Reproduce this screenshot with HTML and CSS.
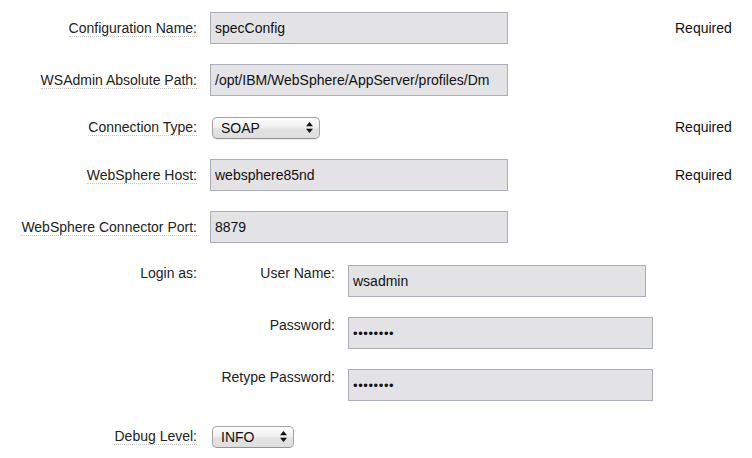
FILE: index.html
```html
<!DOCTYPE html>
<html>
<head>
<meta charset="utf-8">
<link rel="stylesheet" href="styles.css">
</head>
<body>
<form class="form">
  <div class="row">
    <label class="label"><span class="u">Configuration Name:</span></label>
    <div class="field"><input class="text" type="text" value="specConfig"></div>
    <div class="req">Required</div>
  </div>
  <div class="row">
    <label class="label"><span class="u">WSAdmin Absolute Path:</span></label>
    <div class="field"><input class="text" type="text" value="/opt/IBM/WebSphere/AppServer/profiles/Dm"></div>
    <div class="req"></div>
  </div>
  <div class="row row-select">
    <label class="label"><span class="u">Connection Type:</span></label>
    <div class="field">
      <span class="selwrap sel-soap">
        <select class="sel"><option>SOAP</option><option>RMI</option></select>
        <svg class="arrows" width="7" height="11" viewBox="0 0 7 11"><path d="M3.5 0 L7 4.2 L0 4.2 Z M0 6.8 L7 6.8 L3.5 11 Z" fill="#111"/></svg>
      </span>
    </div>
    <div class="req">Required</div>
  </div>
  <div class="row">
    <label class="label"><span class="u">WebSphere Host:</span></label>
    <div class="field"><input class="text" type="text" value="websphere85nd"></div>
    <div class="req">Required</div>
  </div>
  <div class="row">
    <label class="label"><span class="u">WebSphere Connector Port:</span></label>
    <div class="field"><input class="text" type="text" value="8879"></div>
    <div class="req"></div>
  </div>
  <div class="row row-login">
    <label class="label label-top">Login as:</label>
    <div class="login">
      <div class="subrow">
        <label class="sublabel">User Name:</label>
        <input class="text" type="text" value="wsadmin">
      </div>
      <div class="subrow">
        <label class="sublabel">Password:</label>
        <input class="text pw" type="password" value="password">
      </div>
      <div class="subrow">
        <label class="sublabel">Retype Password:</label>
        <input class="text pw" type="password" value="password">
      </div>
    </div>
  </div>
  <div class="row row-select">
    <label class="label"><span class="u">Debug Level:</span></label>
    <div class="field">
      <span class="selwrap sel-info">
        <select class="sel"><option>INFO</option><option>DEBUG</option><option>WARN</option></select>
        <svg class="arrows" width="7" height="11" viewBox="0 0 7 11"><path d="M3.5 0 L7 4.2 L0 4.2 Z M0 6.8 L7 6.8 L3.5 11 Z" fill="#111"/></svg>
      </span>
    </div>
    <div class="req"></div>
  </div>
</form>
</body>
</html>
```
FILE: styles.css
```css
html, body {
  margin: 0;
  padding: 0;
  background: #ffffff;
}
body {
  font-family: "Liberation Sans", Arial, Helvetica, sans-serif;
  font-size: 14px;
  color: #222;
}
.form {
  display: flex;
  flex-direction: column;
  gap: 20px;
  padding-top: 12px;
}
.row {
  display: flex;
  align-items: center;
  height: 32px;
}
.row-select {
  height: 23px;
}
.row-login {
  height: auto;
  align-items: flex-start;
  margin-top: 2px;
}
.row-login + .row-select {
  margin-top: 4px;
}
.label {
  width: 197px;
  flex: none;
  text-align: right;
  margin-right: 13px;
  line-height: 17px;
}
.label-top {
  line-height: 14px;
  padding-top: 1px;
}
.u {
  border-bottom: 1px dotted #c4c4c4;
}
.field {
  width: 465px;
  flex: none;
  display: flex;
  align-items: center;
}
.req {
  color: #111;
  line-height: 17px;
}
.text {
  box-sizing: border-box;
  width: 298px;
  height: 32px;
  margin: 0;
  padding: 0 4px;
  border: 1px solid #aaadba;
  border-radius: 0;
  background: #e3e3e5;
  font-family: "Liberation Sans", Arial, Helvetica, sans-serif;
  font-size: 14px;
  color: #111;
  outline: none;
}
.pw {
  width: 305px;
  padding-left: 4px;
  letter-spacing: 0.6px;
  font-size: 13px;
}
.login {
  display: flex;
  flex-direction: column;
  gap: 20px;
}
.subrow {
  display: flex;
  align-items: flex-start;
}
.sublabel {
  width: 125px;
  flex: none;
  text-align: right;
  margin-right: 13px;
  line-height: 14px;
  padding-top: 1px;
}
.selwrap {
  position: relative;
  display: inline-block;
  margin-left: 2px;
  height: 22px;
}
.sel {
  box-sizing: border-box;
  -webkit-appearance: none;
  appearance: none;
  height: 22px;
  margin: 0;
  padding: 0 0 0 8px;
  border: 1px solid #a3a3a3;
  border-bottom-color: #949494;
  border-radius: 5px;
  background: linear-gradient(to bottom, #fdfdfd 0%, #f1f1f1 45%, #e2e2e2 55%, #dedede 100%);
  box-shadow: 0 1px 1px rgba(0,0,0,0.08);
  font-family: "Liberation Sans", Arial, Helvetica, sans-serif;
  font-size: 14px;
  color: #111;
  outline: none;
}
.sel-soap .sel {
  width: 108px;
}
.sel-info .sel {
  width: 82px;
}
.arrows {
  position: absolute;
  right: 7px;
  top: 5px;
  pointer-events: none;
}
```
